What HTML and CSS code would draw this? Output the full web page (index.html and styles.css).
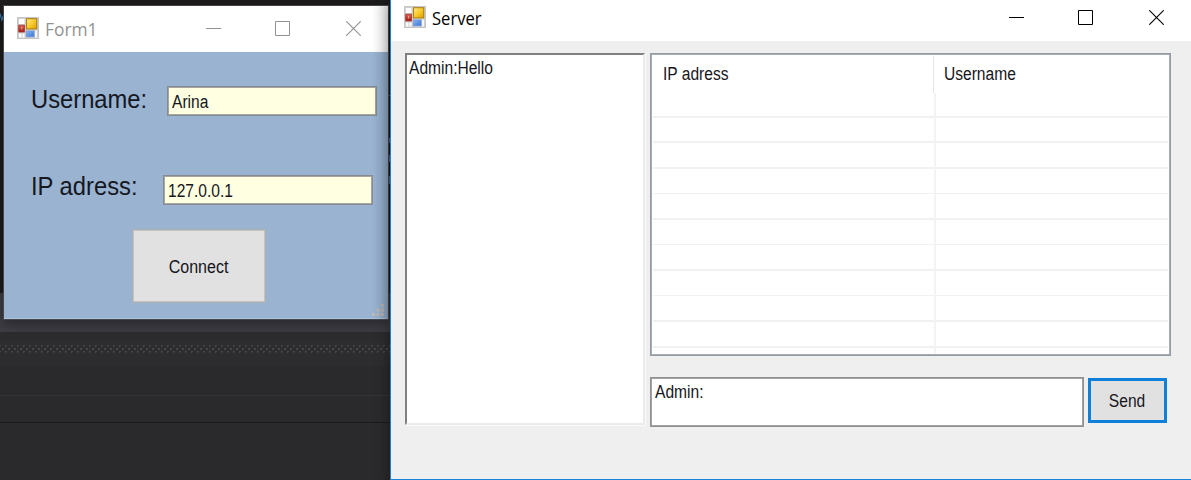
FILE: index.html
```
<!DOCTYPE html>
<html lang="en">
<head>
<meta charset="utf-8">
<title>Server</title>
<link rel="stylesheet" href="styles.css">
</head>
<body>
<svg width="0" height="0" class="defs">
  <defs>
    <linearGradient id="gold" x1="0" y1="0" x2="1" y2="1"><stop offset="0" stop-color="#ffea8c"/><stop offset=".5" stop-color="#f8cb2c"/><stop offset="1" stop-color="#e09c00"/></linearGradient>
    <linearGradient id="red" x1="0" y1="0" x2="0" y2="1"><stop offset="0" stop-color="#dc6253"/><stop offset="1" stop-color="#a51912"/></linearGradient>
    <linearGradient id="blue" x1="0" y1="0" x2="1" y2="1"><stop offset="0" stop-color="#8fb8f5"/><stop offset="1" stop-color="#3571d2"/></linearGradient>
    <symbol id="app" viewBox="0 0 22 22">
      <rect x=".5" y=".5" width="21" height="21" fill="#cfcfcf" stroke="#c6c6c6"/>
      <rect x="2" y="2" width="5.5" height="5" fill="#fff"/>
      <rect x="2" y="16.5" width="2.5" height="4" fill="#fff"/>
      <rect x="5.5" y="16.5" width="2" height="4" fill="#fff"/>
      <rect x="18" y="13.5" width="2" height="7" fill="#f6f6f6"/>
      <rect x="9.5" y="1.7" width="10.2" height="10.2" fill="url(#gold)" stroke="#b18410" stroke-width="1.1"/>
      <rect x="1.7" y="8.2" width="5.8" height="6.8" fill="url(#red)" stroke="#a8382f" stroke-width=".8"/>
      <rect x="4" y="9.8" width="1.2" height="2.6" fill="#e79a90"/>
      <rect x="9.3" y="14" width="7.8" height="5.8" fill="url(#blue)" stroke="#6d98de" stroke-width=".8"/>
    </symbol>
    <symbol id="min" viewBox="0 0 15 15"><path d="M0 7.5H15" fill="none" stroke="currentColor"/></symbol>
    <symbol id="max" viewBox="0 0 15 15"><path d="M.5 .5h14v14h-14z" fill="none" stroke="currentColor"/></symbol>
    <symbol id="close" viewBox="0 0 15 15"><path d="M.3 .3L14.7 14.7M14.7 .3L.3 14.7" fill="none" stroke="currentColor" stroke-width="1.1"/></symbol>
  </defs>
</svg>
<div class="desktop">
  <div class="editor"></div>
  <div class="splitter"></div>
  <div class="grip-row"><svg width="391" height="8">
    <defs><pattern id="dots" width="6" height="8" patternUnits="userSpaceOnUse"><path d="M5 0h1v2h-1zM0 0h1v1h-1zM2 3h2v2h-2zM5 6h1v2h-1zM0 6h1v1h-1z" fill="#47474a"/></pattern></defs>
    <rect width="391" height="8" fill="url(#dots)"/></svg></div>
  <div class="panel panel-a"></div>
  <div class="panel panel-b"></div>
  <div class="panel panel-c"></div>
  <svg class="code-left" width="4" height="10"><path d="M0 .5L1.8 7L4 1" fill="none" stroke="#3e7fb5" stroke-width="1.2"/></svg>
  <svg class="code-right" width="2" height="100"><path d="M0 0h2v1H0zM0 43h2v5H0zM0 60h2v7H0zM0 81h2v8H0z" fill="#59779a"/></svg>

  <section class="window client">
    <header class="titlebar">
      <svg class="app-icon"><use href="#app"/></svg><span class="title">Form1</span>
      <span class="controls"><svg><use href="#min"/></svg><svg><use href="#max"/></svg><svg><use href="#close"/></svg></span>
    </header>
    <div class="client-body">
      <div class="field field-user"><label class="label">Username:</label><div class="entry"><span class="ui">Arina</span></div></div>
      <div class="field field-ip"><label class="label">IP adress:</label><div class="entry"><span class="ui">127.0.0.1</span></div></div>
      <button class="connect"><span class="ui">Connect</span></button>
    </div>
    <svg class="resize" width="12" height="12"><path d="M9 0h3v3H9zM4.5 4.5h3v3h-3zM9 4.5h3v3H9zM0 9h3v3H0zM4.5 9h3v3h-3zM9 9h3v3H9z" fill="#bdbab8"/></svg>
  </section>

  <section class="window server">
    <header class="titlebar">
      <svg class="app-icon"><use href="#app"/></svg><span class="title">Server</span>
      <span class="controls"><svg><use href="#min"/></svg><svg><use href="#max"/></svg><svg><use href="#close"/></svg></span>
    </header>
    <div class="server-body">
      <div class="log"><span class="ui">Admin:Hello</span></div>
      <div class="right">
        <div class="listview">
          <div class="head"><div class="col first"><span class="ui">IP adress</span></div><div class="col"><span class="ui">Username</span></div></div>
          <div class="rows"><div class="cells"></div><div class="cells second"></div></div>
        </div>
        <div class="compose"><div class="message"><span class="ui">Admin:</span></div><button class="send"><span class="ui">Send</span></button></div>
      </div>
    </div>
  </section>
</div>
</body>
</html>
```
FILE: styles.css
```
* { box-sizing: border-box; }
body { margin: 0; overflow: hidden; font-family: "Liberation Sans", Arial, sans-serif; }
.defs { position: absolute; }
svg { display: block; flex: none; }
button { font: inherit; padding: 0; border-radius: 0; margin: 0; }

.desktop { position: relative; width: 1191px; height: 480px; overflow: hidden; background: #2a2a2c; display: flex; flex-direction: column; }
.editor { height: 293px; background: #1e1c1c; }
.splitter { height: 39px; background: #3f3f46; }
.grip-row { height: 34px; padding-top: 13px; background: #2d2d30; }
.panel { background: #2a2a2c; }
.panel-a { height: 30px; border-bottom: 1px solid #333337; }
.panel-b { height: 27px; border-bottom: 1px solid #1b1b1c; }
.panel-c { flex: 1; }
.code-left { position: absolute; left: 0; top: 13px; }
.code-right { position: absolute; left: 388px; top: 95px; }

.window { position: absolute; }
.titlebar { display: flex; background: #fff; }
.app-icon { width: 22px; height: 22px; }
.title { font: 18px/24px "Open Sans", "Noto Sans", sans-serif; transform-origin: 0 50%; white-space: nowrap; }
.controls { display: flex; margin-left: auto; }
.controls svg { width: 15px; height: 15px; }
.controls svg:nth-child(2) { margin: 0 56px 0 54px; }
.ui { display: inline-block; font-size: 18px; line-height: 20px; white-space: nowrap; transform: scaleX(.865); transform-origin: 0 50%; color: #16161c; }

.client { left: 4px; top: 6px; width: 384px; height: 313px; background: #99b3d1; box-shadow: 0 0 0 1px #45474b, 0 5px 12px 2px rgba(0,0,0,.35); }
.client::after { content: ""; position: absolute; inset: 0 0 0 auto; width: 16px; background: linear-gradient(90deg, transparent, rgba(0,0,0,.11)); }
.client .titlebar { height: 46px; padding: 11px 27px 0 13px; color: #929292; }
.client .titlebar .title { margin-left: 6px; transform: scaleX(.965); }
.client .controls { padding-top: 4px; }
.client-body { height: 267px; border-bottom: 1px solid #a9c3df; padding-left: 27px; }
.field { display: flex; }
.field-user { padding-top: 34px; }
.field-ip { padding-top: 59px; }
.label { width: 136px; font-size: 25px; line-height: 28px; color: #15181f; transform: scaleX(.95); transform-origin: 0 50%; margin-top: -1px; white-space: nowrap; }
.field-ip .label { width: 132px; margin-top: -3px; }
.entry { width: 210px; height: 30px; padding: 5px 0 0 4px; border: 1px solid #858b93; background: #ffffe1; box-shadow: inset 0 0 0 1px #a4a69f; }
.connect { display: flex; align-items: center; justify-content: center; width: 134px; height: 74px; margin: 24px 0 0 101px; padding-top: 1px; border: 1px solid #adb0b3; background: #e1e1e1; box-shadow: inset 0 0 0 1px #c3c3c3; }
.connect .ui, .send .ui { transform-origin: 50% 50%; }
.connect .ui { transform: scaleX(.89); }
.resize { position: absolute; right: 4px; bottom: 3px; }

.server { left: 390px; top: 0; width: 801px; height: 480px; background: #efefef; border-left: 1px solid #1883d7; border-bottom: 1px solid #1883d7; box-shadow: 0 4px 12px 1px rgba(0,0,0,.4); }
.server .titlebar { height: 41px; padding: 6px 27px 0 13px; color: #000; }
.server .titlebar .title { margin-left: 6px; transform: scaleX(.92); }
.server .controls { padding-top: 4px; }
.server-body { display: flex; gap: 5px; padding: 12px 20px 0 14px; }
.log { width: 241px; height: 372px; padding: 3px 0 0 2px; background: #fff; border: 2px solid; border-color: #808080 #ebebeb #ebebeb #808080; box-shadow: 1px 1px 0 #fafafa; }
.right { width: 521px; flex: none; }
.listview { height: 303px; padding: 1px; border: 1px solid #959ba3; background: #fff; box-shadow: inset 0 0 0 1px #a5abb2; overflow: hidden; }
.head { display: flex; height: 38px; padding-top: 1px; }
.col { padding: 8px 0 0 10px; }
.col.first { width: 282px; padding-left: 11px; border-right: 1px solid #e4e4e4; }
.rows { display: flex; height: 260px; margin: 0 1px; background: repeating-linear-gradient(to bottom, transparent 0 22.9px, #f1f1f1 22.9px 24.5px, transparent 24.5px 25.56px); }
.cells { width: 283px; border-right: 2px solid #f3f3f3; }
.cells.second { flex: 1; border: 0; }
.compose { display: flex; gap: 4px; padding-top: 21px; }
.message { width: 434px; height: 50px; padding: 4px 0 0 4px; border: 1px solid #909090; background: #fff; box-shadow: inset 0 0 0 1px #a2a2a2; }
.send { display: flex; align-items: center; justify-content: center; width: 79px; height: 45px; margin-top: 1px; padding-right: 1px; border: 3px solid #0f80d9; background: #e1e1e1; }
```
